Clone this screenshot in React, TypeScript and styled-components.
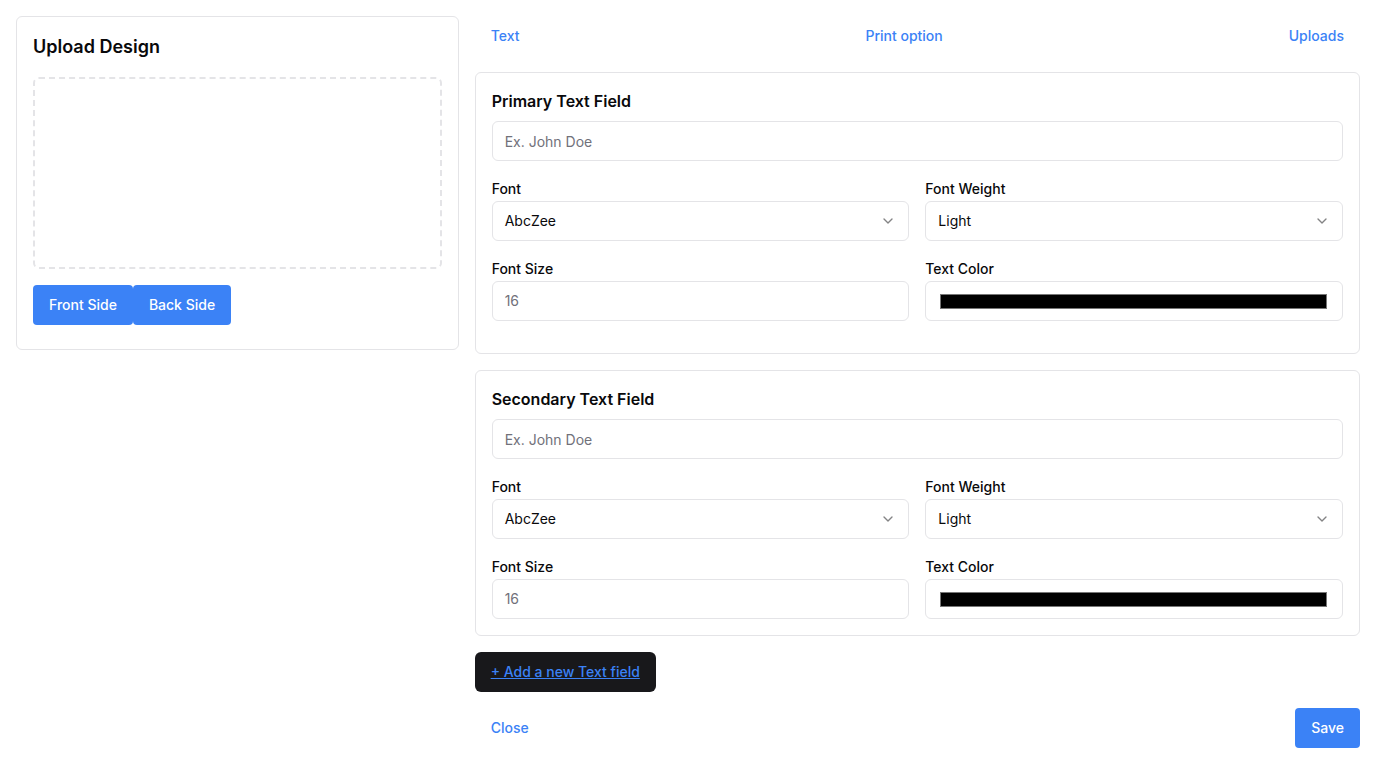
import React from "react";
import styled, { createGlobalStyle } from "styled-components";
import { ChevronDown } from "lucide-react";

const Global = createGlobalStyle`
  * { box-sizing: border-box; }
  html, body { margin: 0; padding: 0; background: #fff; }
  body { font-family: Inter, "Noto Sans", sans-serif; color: #09090b; -webkit-font-smoothing: antialiased; }
`;

const Page = styled.div`
  display: grid;
  grid-template-columns: 1fr 2fr;
  gap: 16px;
  padding: 16px;
  align-items: start;
`;

const Card = styled.div<{ $pb?: number }>`
  border: 1px solid #e4e4e7;
  border-radius: 6px;
  padding: 16px 16px ${(p) => p.$pb ?? 16}px;
  background: #fff;
`;

const CardTitle = styled.h2<{ $size?: number }>`
  margin: 0;
  font-size: ${(p) => p.$size ?? 16}px;
  line-height: ${(p) => (p.$size ?? 16) + 8 + ((p.$size ?? 16) > 16 ? 2 : 0)}px;
  font-weight: 600;
  color: #09090b;
`;

const DropZone = styled.div`
  margin-top: 16px;
  height: 192px;
  border: 2px dashed #e4e4e7;
  border-radius: 6px;
`;

const SideRow = styled.div`
  display: flex;
  margin-top: 16px;
`;

const BlueButton = styled.button`
  height: 40px;
  padding: 0 16px 1px;
  border: none;
  border-radius: 4px;
  background: #3b82f6;
  color: #fff;
  font-family: inherit;
  font-size: 14px;
  font-weight: 500;
  cursor: pointer;
`;

const Column = styled.div`
  display: flex;
  flex-direction: column;
  gap: 16px;
`;

const Tabs = styled.div`
  display: flex;
  justify-content: space-between;
`;

const LinkButton = styled.button`
  height: 40px;
  padding: 0 16px 2px;
  background: none;
  border: none;
  color: #3b82f6;
  font-family: inherit;
  font-size: 14px;
  font-weight: 500;
  cursor: pointer;
`;

const FieldCard = styled(Card)`
  display: flex;
  flex-direction: column;
`;

const TextInput = styled.input`
  display: block;
  width: 100%;
  height: 40px;
  margin-top: 8px;
  padding: 0 12px;
  border: 1px solid #e4e4e7;
  border-radius: 6px;
  font-family: inherit;
  font-size: 14px;
  color: #09090b;
  background: #fff;
  &::placeholder { color: #71717a; }
`;

const Grid = styled.div`
  display: grid;
  grid-template-columns: 1fr 1fr;
  column-gap: 16px;
  row-gap: 18px;
  margin-top: 18px;
`;

const Field = styled.div`
  display: flex;
  flex-direction: column;
  gap: 2px;
`;

const Label = styled.label`
  font-size: 14px;
  line-height: 20px;
  font-weight: 500;
  color: #09090b;
`;

const Box = styled.div`
  display: flex;
  align-items: center;
  justify-content: space-between;
  height: 40px;
  padding: 0 12px 1px;
  border: 1px solid #e4e4e7;
  border-radius: 6px;
  font-size: 14px;
  color: #09090b;
  background: #fff;
`;

const Muted = styled.span`
  color: #71717a;
`;

const ColorBox = styled(Box)`
  padding: 0 15px 0 14px;
`;

const Swatch = styled.div<{ $color: string }>`
  flex: 1;
  height: 15px;
  background: ${(p) => p.$color};
  border: 1px solid #767676;
`;

const AddButton = styled.button`
  align-self: flex-start;
  height: 40px;
  padding: 0 16px 1px;
  border: none;
  border-radius: 6px;
  background: #18181b;
  color: #3b82f6;
  text-decoration: underline;
  font-family: inherit;
  font-size: 14px;
  font-weight: 500;
  cursor: pointer;
`;

const Footer = styled.div`
  display: flex;
  justify-content: space-between;
  align-items: center;
`;

type FieldBlockProps = { title: string; pb?: number };

function FieldBlock({ title, pb }: FieldBlockProps) {
  return (
    <FieldCard $pb={pb}>
      <CardTitle>{title}</CardTitle>
      <TextInput placeholder="Ex. John Doe" />
      <Grid>
        <Field>
          <Label>Font</Label>
          <Box>
            <span>AbcZee</span>
            <ChevronDown size={16} color="#09090b" opacity={0.5} />
          </Box>
        </Field>
        <Field>
          <Label>Font Weight</Label>
          <Box>
            <span>Light</span>
            <ChevronDown size={16} color="#09090b" opacity={0.5} />
          </Box>
        </Field>
        <Field>
          <Label>Font Size</Label>
          <Box>
            <Muted>16</Muted>
          </Box>
        </Field>
        <Field>
          <Label>Text Color</Label>
          <ColorBox>
            <Swatch $color="#000" />
          </ColorBox>
        </Field>
      </Grid>
    </FieldCard>
  );
}

export default function App() {
  return (
    <>
      <Global />
      <Page>
        <Card $pb={24}>
          <CardTitle $size={18}>Upload Design</CardTitle>
          <DropZone />
          <SideRow>
            <BlueButton>Front Side</BlueButton>
            <BlueButton>Back Side</BlueButton>
          </SideRow>
        </Card>
        <Column>
          <Tabs>
            <LinkButton>Text</LinkButton>
            <LinkButton>Print option</LinkButton>
            <LinkButton>Uploads</LinkButton>
          </Tabs>
          <FieldBlock title="Primary Text Field" pb={32} />
          <FieldBlock title="Secondary Text Field" />
          <AddButton>+ Add a new Text field</AddButton>
          <Footer>
            <LinkButton>Close</LinkButton>
            <BlueButton>Save</BlueButton>
          </Footer>
        </Column>
      </Page>
    </>
  );
}
